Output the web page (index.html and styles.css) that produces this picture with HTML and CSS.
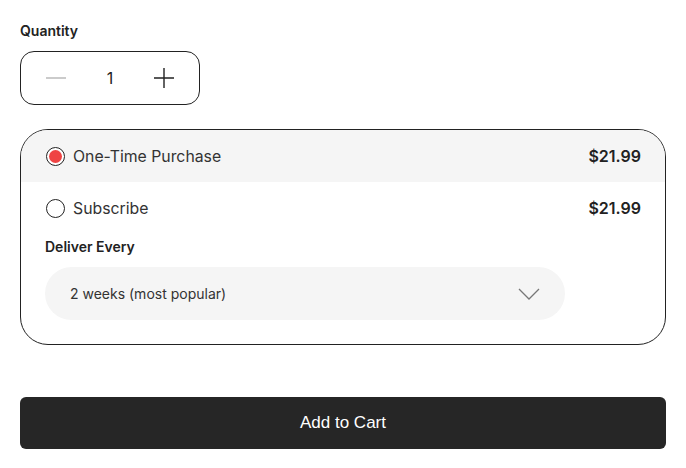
FILE: index.html
```html
<!DOCTYPE html>
<html lang="en">
<head>
    <meta charset="UTF-8">
    <title>Product Options</title>
    <link rel="stylesheet" href="styles.css">
</head>
<body>

    <!-- Quantity -->
    <div class="field-label">Quantity</div>
    <div class="qty">
        <button class="qty-btn" aria-label="Decrease">
            <svg width="22" height="22" viewBox="0 0 22 22"><path d="M1 11h20" stroke="#b5b5b5" stroke-width="1.4" fill="none"/></svg>
        </button>
        <span class="qty-value">1</span>
        <button class="qty-btn" aria-label="Increase">
            <svg width="22" height="22" viewBox="0 0 22 22"><path d="M1 11h20M11 1v20" stroke="#222" stroke-width="1.4" fill="none"/></svg>
        </button>
    </div>

    <!-- Purchase options -->
    <div class="options">
        <label class="option selected">
            <span class="radio checked"></span>
            <span class="option-name">One-Time Purchase</span>
            <span class="price">$21.99</span>
        </label>
        <label class="option">
            <span class="radio"></span>
            <span class="option-name">Subscribe</span>
            <span class="price">$21.99</span>
        </label>
        <div class="deliver">
            <div class="field-label">Deliver Every</div>
            <div class="select">
                <span>2 weeks (most popular)</span>
                <svg width="22" height="12" viewBox="0 0 22 12"><path d="M1 1l10 10L21 1" stroke="#777" stroke-width="1.3" fill="none"/></svg>
            </div>
        </div>
    </div>

    <button class="add-cart">Add to Cart</button>

</body>
</html>
```

FILE: styles.css
```css
* {
    margin: 0;
    padding: 0;
    box-sizing: border-box;
}

body {
    font-family: Inter, "Noto Sans", sans-serif;
    color: #222;
    background-color: #fff;
    padding: 22px 20px 0 20px;
}

.field-label {
    font-size: 14px;
    font-weight: 600;
    line-height: 17px;
    color: #222;
}

/* Quantity */
.qty {
    margin-top: 12px;
    width: 180px;
    height: 54px;
    border: 1px solid #222;
    border-radius: 14px;
    display: flex;
    align-items: center;
    justify-content: space-between;
    padding: 0 24px 0 24px;
}

.qty-btn {
    background: none;
    border: none;
    width: 22px;
    height: 22px;
    display: flex;
}

.qty-value {
    font-size: 16px;
    color: #222;
}

/* Options */
.options {
    margin-top: 24px;
    border: 1px solid #222;
    border-radius: 28px;
    overflow: hidden;
    padding-bottom: 24px;
}

.option {
    display: flex;
    align-items: center;
    height: 52px;
    padding: 0 24px 0 25px;
    font-size: 16px;
    color: #333;
}

.option.selected {
    background-color: #f5f5f5;
}

.radio {
    width: 19px;
    height: 19px;
    border: 1.3px solid #222;
    border-radius: 50%;
    margin-right: 8px;
    display: flex;
    align-items: center;
    justify-content: center;
    background-color: #fff;
}

.radio.checked::after {
    content: "";
    width: 13px;
    height: 13px;
    border-radius: 50%;
    background-color: #ef4444;
}

.option-name {
    flex: 1;
    font-size: 15.8px;
}

.price {
    font-weight: 600;
    color: #222;
}

.deliver {
    padding: 4px 0 0 24px;
}

.select {
    margin-top: 12px;
    width: 520px;
    height: 53px;
    border-radius: 27px;
    background-color: #f5f5f5;
    display: flex;
    align-items: center;
    justify-content: space-between;
    padding: 0 25px 0 25px;
    font-size: 14px;
    color: #333;
}

/* Button */
.add-cart {
    margin-top: 52px;
    width: 100%;
    height: 52px;
    background-color: #262626;
    color: #fff;
    border: none;
    border-radius: 6px;
    font-family: "Liberation Sans", Arial, sans-serif;
    font-size: 17px;
}
```
